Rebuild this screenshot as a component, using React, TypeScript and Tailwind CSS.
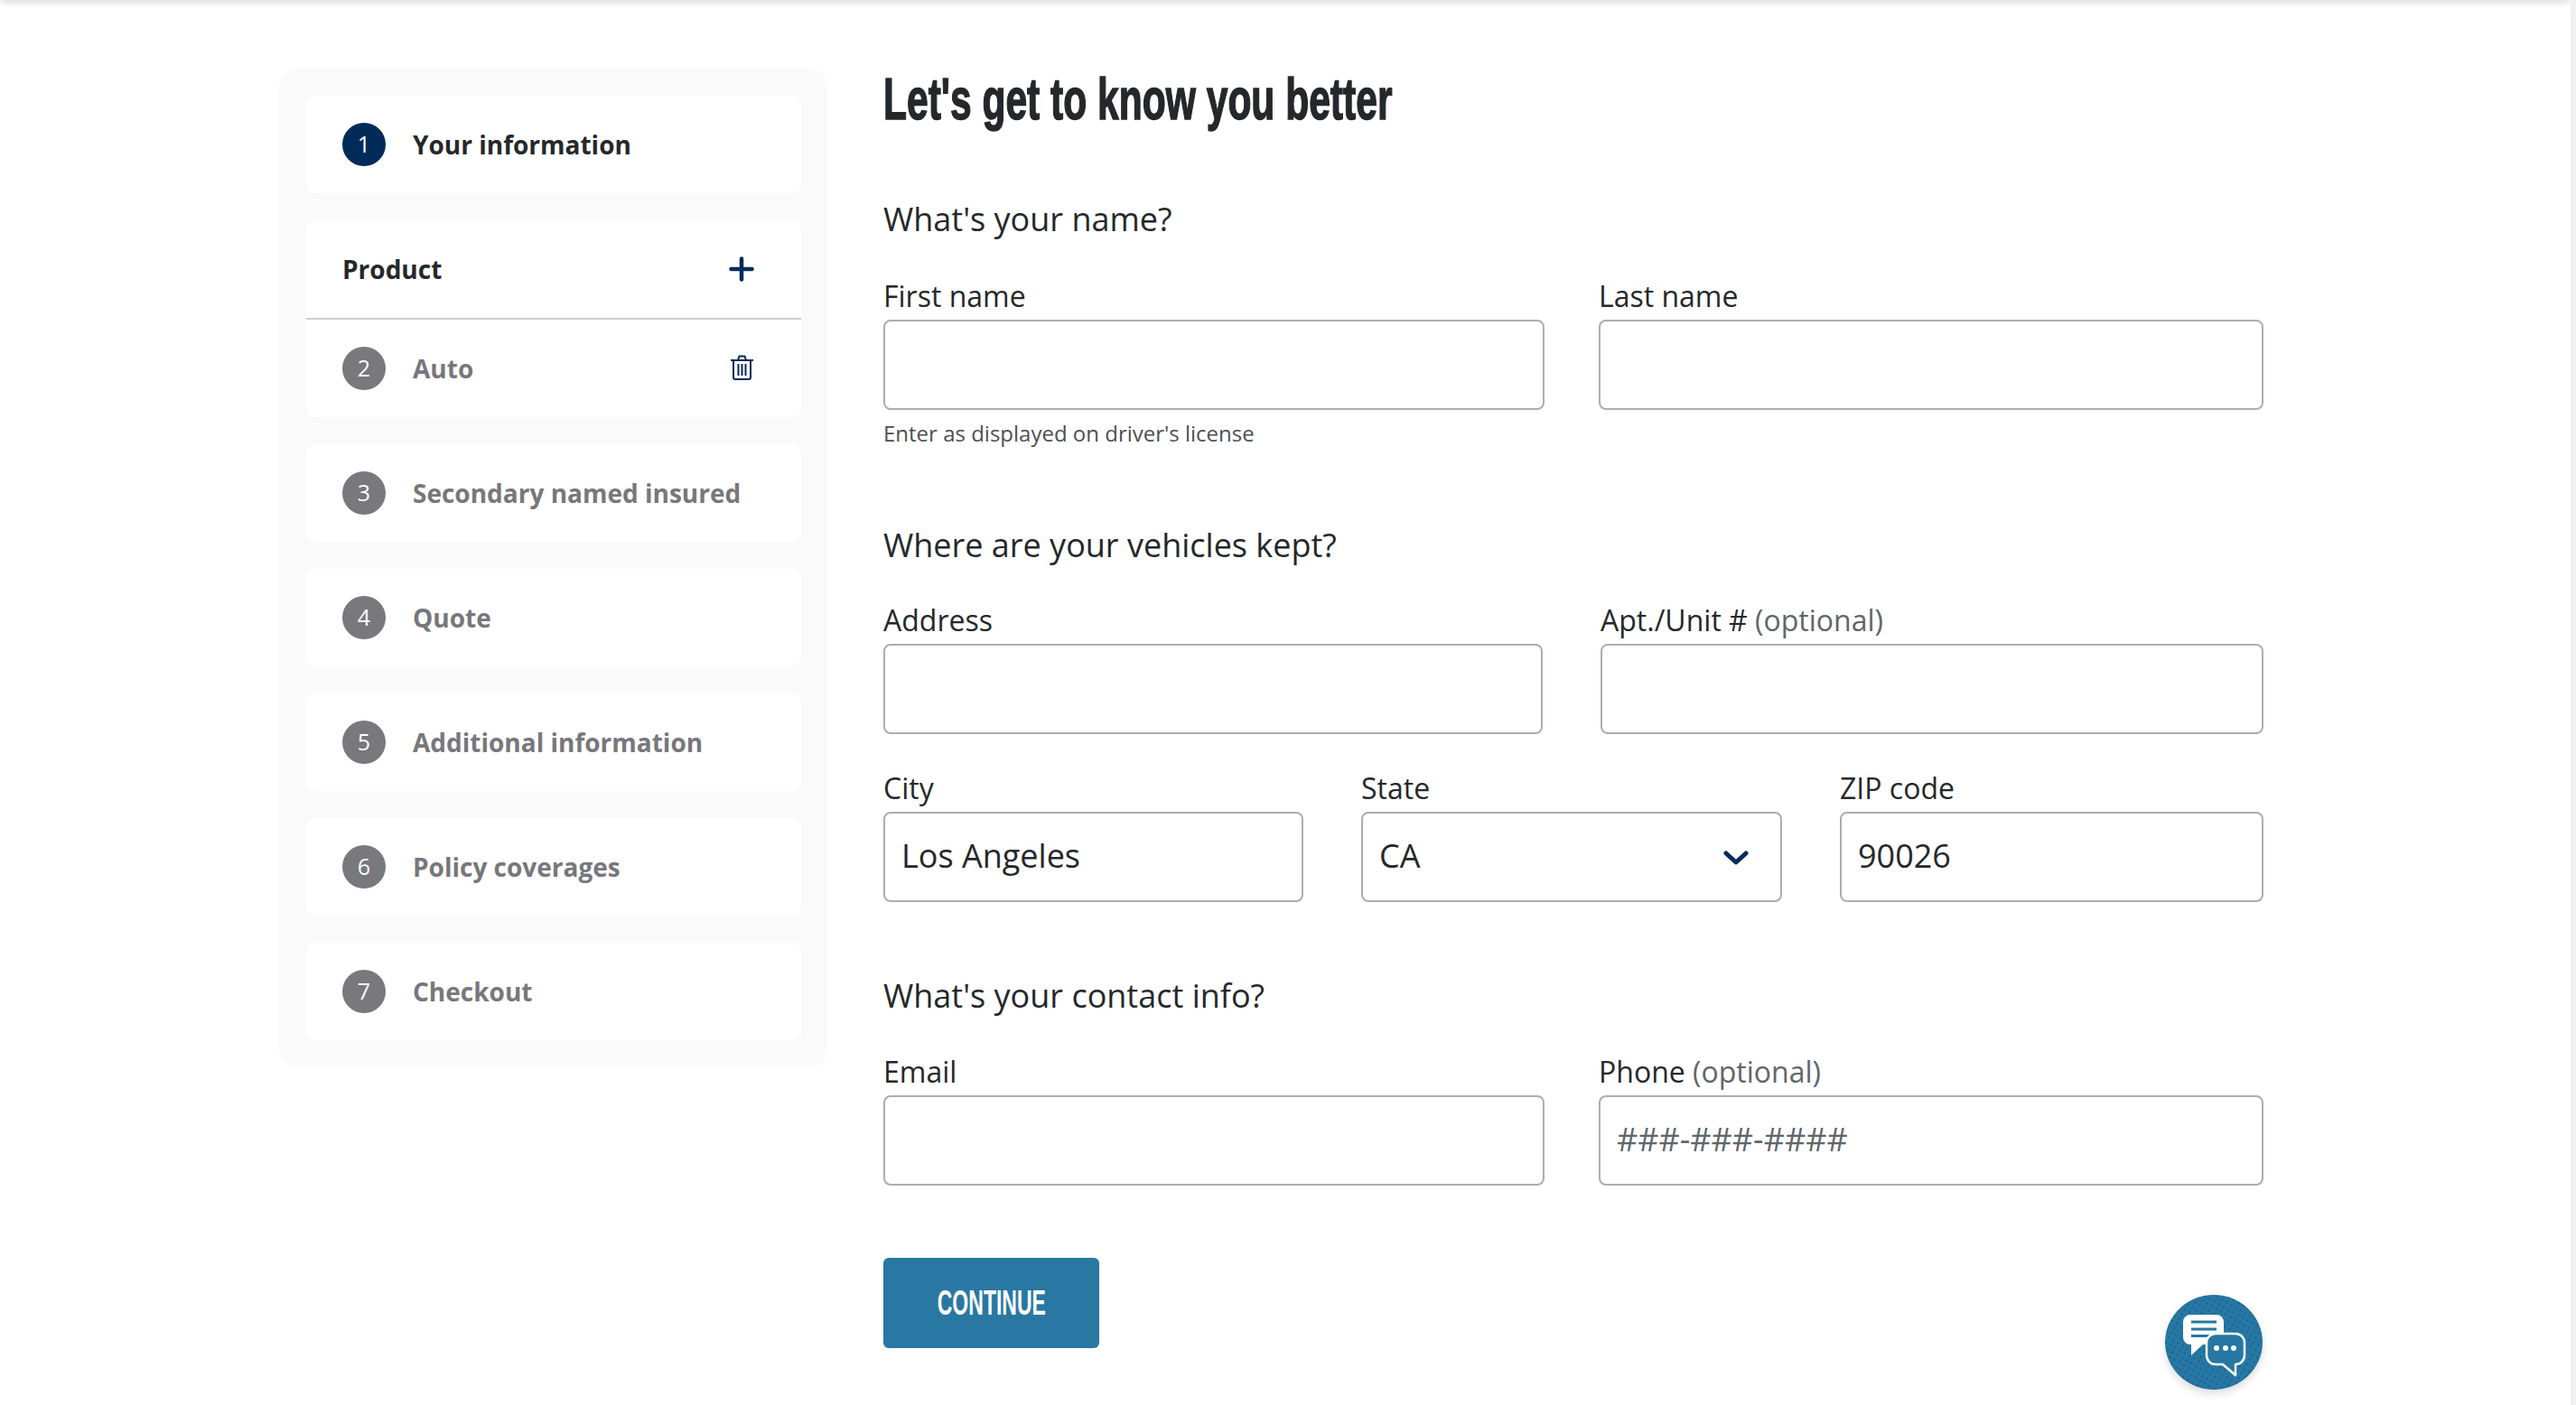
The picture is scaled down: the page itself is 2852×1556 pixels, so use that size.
import React from "react";

const steps = [
  { n: 3, label: "Secondary named insured" },
  { n: 4, label: "Quote" },
  { n: 5, label: "Additional information" },
  { n: 6, label: "Policy coverages" },
  { n: 7, label: "Checkout" },
];

function StepBadge({ n, active = false }: { n: number; active?: boolean }) {
  return (
    <span
      className={`flex h-[48px] w-[48px] shrink-0 items-center justify-center rounded-full text-[25px] text-white ${
        active ? "bg-[#022b5a]" : "bg-[#78787d]"
      }`}
    >
      {n}
    </span>
  );
}

function StepRow({ n, label, active = false }: { n: number; label: string; active?: boolean }) {
  return (
    <div className="flex h-[108px] items-center gap-[30px] pl-[40px]">
      <StepBadge n={n} active={active} />
      <span className={`text-[28px] font-bold ${active ? "text-[#25282a]" : "text-[#77777c]"}`}>{label}</span>
    </div>
  );
}

function Sidebar() {
  return (
    <aside className="flex h-[1106px] w-[607px] shrink-0 flex-col gap-[30px] rounded-[20px] bg-[#fafafa] py-[30px] pl-[30px] pr-[29px]">
      <div className="rounded-[10px] bg-white">
        <StepRow n={1} label="Your information" active />
      </div>
      <div className="rounded-[10px] bg-white">
        <div className="box-content flex h-[108px] items-center justify-between border-b-2 border-[#cccccc] pl-[40px] pr-[52px]">
          <span className="text-[28px] font-bold text-[#25282a]">Product</span>
          <svg width="28" height="28" viewBox="0 0 28 28" fill="none" stroke="#022b5a" strokeWidth="4.5" strokeLinecap="round">
            <path d="M14 2.5v23M2.5 14h23" />
          </svg>
        </div>
        <div className="flex h-[108px] items-center justify-between pr-[53px]">
          <div className="flex items-center gap-[30px] pl-[40px]">
            <StepBadge n={2} />
            <span className="text-[28px] font-bold text-[#77777c]">Auto</span>
          </div>
          <svg width="25" height="28" viewBox="0 0 25 28" fill="none" stroke="#022b5a" strokeWidth="2" className="-mt-[2px]">
            <path d="M0 6h25M8 6l1.5-4.5h6L17 6M3 6v19a2 2 0 0 0 2 2h15a2 2 0 0 0 2-2V6" />
            <path d="M8.5 10v13M12.5 10v13M16.5 10v13" />
          </svg>
        </div>
      </div>
      {steps.map((s) => (
        <div key={s.n} className="rounded-[10px] bg-white">
          <StepRow n={s.n} label={s.label} />
        </div>
      ))}
    </aside>
  );
}

function SectionTitle({ children, className }: { children: React.ReactNode; className: string }) {
  return <h2 className={`h-[44px] text-[36px] leading-[44px] text-[#25282a] ${className}`}>{children}</h2>;
}

function Field({ label, optional, value, placeholder }: { label: string; optional?: boolean; value?: string; placeholder?: string }) {
  return (
    <div className="min-w-0">
      <label className="block h-[40px] text-[32px] leading-[40px] text-[#25282a]">
        {label}
        {optional && <span className="text-[#5f666c]"> (optional)</span>}
      </label>
      <input
        readOnly
        defaultValue={value}
        placeholder={placeholder}
        className="mt-[6px] block h-[100px] w-full rounded-[8px] border-2 border-[#adadad] bg-white pb-[3px] pl-[18px] pr-[18px] text-[36px] text-[#25282a] outline-none placeholder:text-[#5f666c]"
      />
    </div>
  );
}

function ChatButton() {
  return (
    <button className="absolute left-[2397px] top-[1434px] h-[105px] w-[108px] rounded-full shadow-[0_4px_10px_rgba(0,0,0,0.14)]">
      <svg width="108" height="105" viewBox="0 0 108 105" className="block">
        <defs>
          <pattern id="dots" width="6" height="6" patternUnits="userSpaceOnUse" patternTransform="rotate(30)">
            <circle cx="3" cy="3" r="0.7" fill="#0e3a68" />
          </pattern>
        </defs>
        <ellipse cx="54" cy="52.5" rx="54" ry="52.5" fill="#2677a3" />
        <ellipse cx="54" cy="52.5" rx="54" ry="52.5" fill="url(#dots)" />
        <path d="M28 22h29a8 8 0 0 1 8 8v17a8 8 0 0 1-8 8H42L29 67V55h-1a8 8 0 0 1-8-8V30a8 8 0 0 1 8-8z" fill="#fff" />
        <path d="M29 30h28M29 38h28M29 45.500h21" stroke="#2677a3" strokeWidth="3" />
        <path d="M56 43h22a10 10 0 0 1 10 10v14a10 10 0 0 1-10 10v12L64 77h-8a10 10 0 0 1-10-10V53a10 10 0 0 1 10-10z" fill="#2677a3" stroke="#fff" strokeWidth="2.500" strokeLinejoin="round" />
        <circle cx="57" cy="59" r="3" fill="#fff" />
        <circle cx="67" cy="59" r="3" fill="#fff" />
        <circle cx="76" cy="59" r="3" fill="#fff" />
      </svg>
    </button>
  );
}

export default function App() {
  return (
    <div className="relative h-[1556px] w-full overflow-hidden border-r-[6px] border-[#f1f1f1] bg-white font-['Open_Sans',sans-serif]">
      <div className="absolute inset-x-0 -top-[4px] h-[4px] shadow-[0_0_10px_rgba(0,0,0,0.35)]" />
      <div className="flex gap-[62px] pl-[309px] pt-[76px]">
        <Sidebar />
        <form className="w-[1528px]">
          <h1 className="h-[70px] origin-left scale-x-[0.665] whitespace-nowrap font-['Liberation_Sans',sans-serif] text-[64px] font-bold leading-[68px] text-[#25282a] [-webkit-text-stroke:1.5px_#25282a]">
            Let's get to know you better
          </h1>

          <SectionTitle className="mt-[75px]">What's your name?</SectionTitle>
          <div className="mt-[43px] grid grid-cols-[732px_736px] gap-x-[60px]">
            <Field label="First name" />
            <Field label="Last name" />
          </div>
          <p className="mt-[10px] h-[32px] text-[24px] leading-[32px] text-[#4d5052]">Enter as displayed on driver's license</p>

          <SectionTitle className="mt-[86px]">Where are your vehicles kept?</SectionTitle>
          <div className="mt-[41px] grid grid-cols-[730px_734px] gap-x-[64px]">
            <Field label="Address" />
            <Field label="Apt./Unit #" optional />
          </div>
          <div className="mt-[40px] grid grid-cols-[465px_466px_469px] gap-x-[64px]">
            <Field label="City" value="Los Angeles" />
            <div>
              <label className="block h-[40px] text-[32px] leading-[40px] text-[#25282a]">State</label>
              <div className="mt-[6px] flex h-[100px] items-center justify-between rounded-[8px] border-2 border-[#adadad] pb-[3px] pl-[18px] pr-[35px] text-[36px] text-[#25282a]">
                CA
                <svg width="28" height="16" viewBox="0 0 28 16" fill="none" stroke="#022b5a" strokeWidth="5" strokeLinecap="round" strokeLinejoin="round" className="mt-[5px]">
                  <path d="M3 3l11 10L25 3" />
                </svg>
              </div>
            </div>
            <Field label="ZIP code" value="90026" />
          </div>

          <SectionTitle className="mt-[82px]">What's your contact info?</SectionTitle>
          <div className="mt-[42px] grid grid-cols-[732px_736px] gap-x-[60px]">
            <Field label="Email" />
            <Field label="Phone" optional placeholder="###-###-####" />
          </div>

          <button
            type="button"
            className="mt-[80px] flex h-[100px] w-[239px] items-center justify-center rounded-[6px] bg-[#2878a3] font-['Liberation_Sans',sans-serif] text-[39px] font-bold text-white"
          >
            <span className="inline-block scale-x-[0.59]">CONTINUE</span>
          </button>
        </form>
      </div>
      <ChatButton />
    </div>
  );
}
